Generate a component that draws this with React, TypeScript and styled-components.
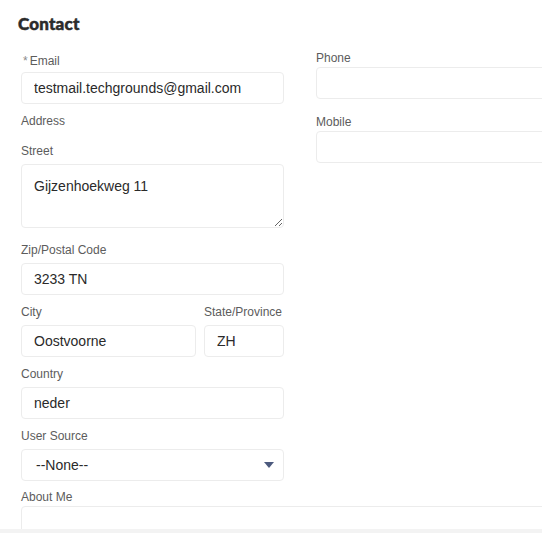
import React from "react";
import styled, { createGlobalStyle } from "styled-components";

const Global = createGlobalStyle`
  html, body {
    margin: 0;
    padding: 0;
    background: #f3f3f3;
    overflow: hidden;
  }
  body {
    font-family: "Liberation Sans", Arial, sans-serif;
  }
`;

const Page = styled.div`
  background: #ffffff;
  height: 529px;
  overflow: hidden;
  padding: 14px 0 0 21px;
  box-sizing: border-box;
  width: 620px;
`;

const Heading = styled.h2`
  margin: 0 0 0 -3px;
  font-family: Lato, "Noto Sans", sans-serif;
  font-weight: 900;
  font-size: 17px;
  line-height: 20px;
  color: #2b2b2b;
  letter-spacing: 0.2px;
  -webkit-text-stroke: 0.5px #2b2b2b;
`;

const Columns = styled.div`
  display: flex;
  gap: 32px;
  align-items: flex-start;
`;

const Column = styled.div`
  width: 263px;
  display: flex;
  flex-direction: column;
`;

const Field = styled.div<{ $mt: number; $gap: number; $w?: number }>`
  display: flex;
  flex-direction: column;
  margin-top: ${(p) => p.$mt}px;
  gap: ${(p) => p.$gap}px;
  width: ${(p) => (p.$w ? `${p.$w}px` : "auto")};
`;

const Label = styled.label`
  font-size: 12px;
  line-height: 14px;
  padding-top: 2px;
  color: #5c5c5c;
  display: block;
`;

const Required = styled.span`
  color: #8a8a8a;
  margin: 0 2px 0 2px;
`;

const Input = styled.input`
  box-sizing: border-box;
  height: 32px;
  width: 100%;
  border: 1px solid #ececec;
  border-radius: 4px;
  padding: 0 12px;
  font-family: "Liberation Sans", Arial, sans-serif;
  font-size: 14px;
  color: #2a2a2a;
  background: #fff;
  outline: none;
`;

const TextArea = styled.textarea<{ $h: number }>`
  box-sizing: border-box;
  height: ${(p) => p.$h}px;
  width: 100%;
  border: 1px solid #ececec;
  border-radius: 4px;
  padding: 12px 12px;
  font-family: "Liberation Sans", Arial, sans-serif;
  font-size: 14px;
  line-height: 18px;
  color: #2a2a2a;
  background: #fff;
  resize: vertical;
  outline: none;
  display: block;
`;

const Row = styled.div`
  display: flex;
  gap: 8px;
`;

const SelectBox = styled.div`
  box-sizing: border-box;
  position: relative;
  height: 32px;
  border: 1px solid #ececec;
  border-radius: 4px;
  padding: 0 14px;
  display: flex;
  align-items: center;
  font-size: 14px;
  color: #2a2a2a;
`;

const Caret = styled.svg`
  position: absolute;
  right: 9px;
  top: 50%;
  margin-top: -3px;
`;

const AboutField = styled(Field)`
  width: 560px;
`;

export default function App() {
  return (
    <>
      <Global />
      <Page>
        <Heading>Contact</Heading>
        <Columns>
          <Column>
            <Field $mt={18} $gap={4}>
              <Label>
                <Required>*</Required>Email
              </Label>
              <Input defaultValue="testmail.techgrounds@gmail.com" />
            </Field>
            <Field $mt={8} $gap={0}>
              <Label>Address</Label>
            </Field>
            <Field $mt={14} $gap={6}>
              <Label>Street</Label>
              <TextArea $h={64} defaultValue="Gijzenhoekweg 11" />
            </Field>
            <Field $mt={13} $gap={6}>
              <Label>Zip/Postal Code</Label>
              <Input defaultValue="3233 TN" />
            </Field>
            <Row>
              <Field $mt={8} $gap={6} $w={175}>
                <Label>City</Label>
                <Input defaultValue="Oostvoorne" />
              </Field>
              <Field $mt={8} $gap={6} $w={80}>
                <Label>State/Province</Label>
                <Input defaultValue="ZH" />
              </Field>
            </Row>
            <Field $mt={8} $gap={6}>
              <Label>Country</Label>
              <Input defaultValue="neder" />
            </Field>
            <Field $mt={8} $gap={6}>
              <Label>User Source</Label>
              <SelectBox>
                --None--
                <Caret width="10" height="6" viewBox="0 0 10 6">
                  <path d="M0 0 H10 L5 6 Z" fill="#4c5a7e" />
                </Caret>
              </SelectBox>
            </Field>
          </Column>
          <Column>
            <Field $mt={15} $gap={2}>
              <Label>Phone</Label>
              <Input />
            </Field>
            <Field $mt={14} $gap={2}>
              <Label>Mobile</Label>
              <Input />
            </Field>
          </Column>
        </Columns>
        <AboutField $mt={7} $gap={2}>
          <Label>About Me</Label>
          <TextArea $h={80} />
        </AboutField>
      </Page>
    </>
  );
}
